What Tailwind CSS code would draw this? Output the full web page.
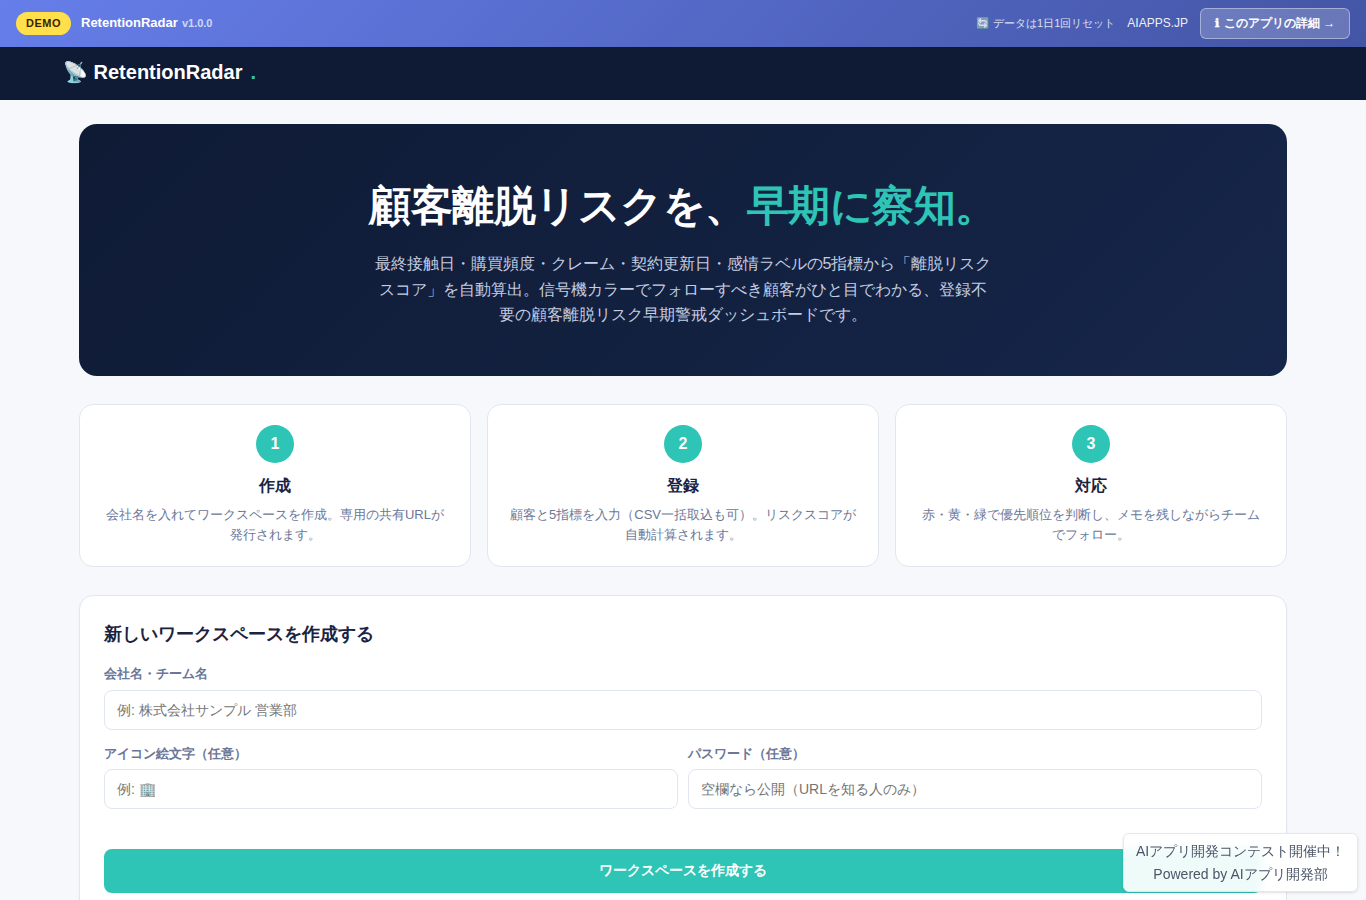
<!DOCTYPE html>
<html lang="ja">
<head>
    <meta charset="UTF-8">
    <meta name="viewport" content="width=device-width, initial-scale=1.0">
    <title>RetentionRadar</title>
    <script src="https://cdn.jsdelivr.net/npm/@tailwindcss/browser@4"></script>
</head>
<body class="bg-[#f7f8fc] text-[#1a2340] font-['Liberation_Sans',sans-serif] h-screen overflow-hidden">
    <!-- Demo bar -->
    <div class="h-[47px] px-4 flex items-center justify-between text-white bg-linear-135 from-[#667eea] to-[#4355a5]">
        <div class="flex items-center gap-2.5">
            <span class="h-[23px] px-2.5 flex items-center rounded-full bg-[#ffe04a] text-[#3d2000] text-[11px] font-bold tracking-[0.5px]">DEMO</span>
            <span class="pb-px text-[13px] font-bold">RetentionRadar <span class="ml-[0.5px] text-[11px] opacity-70">v1.0.0</span></span>
        </div>
        <div class="flex items-center gap-3">
            <span class="text-[11px] opacity-80">🔄 データは1日1回リセット</span>
            <span class="pb-px text-xs opacity-90">AIAPPS.JP</span>
            <a href="#" class="w-[150px] h-[31px] pl-3.5 pb-0.5 flex items-center rounded-md border border-white/40 bg-white/20 text-xs font-bold"><span class="whitespace-nowrap"><span class="mr-px font-['DejaVu_Sans'] [-webkit-text-stroke:0.5px_white]">ℹ</span> このアプリの詳細 →</span></a>
        </div>
    </div>

    <!-- Header -->
    <header class="h-[53px] px-[63px] pb-1 flex items-center bg-[#0f1b35] text-white text-xl font-bold">
        <span>📡 RetentionRadar</span><span class="ml-2 text-[#2ec4b6]">.</span>
    </header>

    <main class="w-[1208px] mx-auto pt-6">
        <!-- Hero -->
        <section class="h-[252px] pt-12 rounded-[18px] text-center bg-linear-135 from-[#0f1b35] to-[#16264a]">
            <h1 class="h-[67px] leading-[67px] text-[42px] font-bold tracking-[-0.5px] text-white">顧客離脱リスクを、<span class="text-[#2ec4b6]">早期に察知。</span></h1>
            <p class="w-[620px] mx-auto mt-3 text-base leading-[25.6px] text-[#c5cde0]">最終接触日・購買頻度・クレーム・契約更新日・感情ラベルの5指標から「離脱リスクスコア」を自動算出。信号機カラーでフォローすべき顧客がひと目でわかる、登録不要の顧客離脱リスク早期警戒ダッシュボードです。</p>
        </section>

        <!-- Steps -->
        <section class="mt-7 grid grid-cols-3 gap-4 text-center">
            <div class="h-[163px] p-5 rounded-[14px] border border-[#e2e6f0] bg-white">
                <div class="size-[38px] mx-auto flex items-center justify-center rounded-full bg-[#2ec4b6] text-white font-bold">1</div>
                <h3 class="mt-2.5 text-base leading-[26px] font-bold">作成</h3>
                <p class="mt-1.5 text-[13px] leading-5 text-[#6b7799]">会社名を入れてワークスペースを作成。専用の共有URLが発行されます。</p>
            </div>
            <div class="h-[163px] p-5 rounded-[14px] border border-[#e2e6f0] bg-white">
                <div class="size-[38px] mx-auto flex items-center justify-center rounded-full bg-[#2ec4b6] text-white font-bold">2</div>
                <h3 class="mt-2.5 text-base leading-[26px] font-bold">登録</h3>
                <p class="mt-1.5 text-[13px] leading-5 text-[#6b7799]">顧客と5指標を入力（CSV一括取込も可）。リスクスコアが自動計算されます。</p>
            </div>
            <div class="h-[163px] p-5 rounded-[14px] border border-[#e2e6f0] bg-white">
                <div class="size-[38px] mx-auto flex items-center justify-center rounded-full bg-[#2ec4b6] text-white font-bold">3</div>
                <h3 class="mt-2.5 text-base leading-[26px] font-bold">対応</h3>
                <p class="mt-1.5 text-[13px] leading-5 text-[#6b7799]">赤・黄・緑で優先順位を判断し、メモを残しながらチームでフォロー。</p>
            </div>
        </section>

        <!-- Create workspace form -->
        <form class="mt-7 p-6 rounded-[14px] border border-[#e2e6f0] bg-white shadow-xs">
            <h2 class="text-lg leading-[29px] font-bold">新しいワークスペースを作成する</h2>
            <label class="block mt-3.5 text-[13px] leading-[21px] font-bold text-[#6b7799]">会社名・チーム名</label>
            <input type="text" placeholder="例: 株式会社サンプル 営業部" class="block w-full h-10 mt-1.5 px-3 rounded-lg border border-[#e2e6f0] text-sm placeholder:text-[#757575]">
            <div class="mt-[13px] grid grid-cols-2 gap-2.5">
                <div>
                    <label class="block text-[13px] leading-[21px] font-bold text-[#6b7799]">アイコン絵文字（任意）</label>
                    <input type="text" placeholder="例: 🏢" class="block w-full h-10 mt-[5px] px-3 rounded-lg border border-[#e2e6f0] text-sm placeholder:text-[#757575]">
                </div>
                <div>
                    <label class="block text-[13px] leading-[21px] font-bold text-[#6b7799]">パスワード（任意）</label>
                    <input type="password" placeholder="空欄なら公開（URLを知る人のみ）" class="block w-full h-10 mt-[5px] px-3 rounded-lg border border-[#e2e6f0] text-sm placeholder:text-[#757575]">
                </div>
            </div>
            <button type="button" class="w-full h-11 mt-10 pb-0.5 rounded-lg bg-[#2ec4b6] text-white text-sm font-bold">ワークスペースを作成する</button>
        </form>
    </main>

    <!-- Contest badge -->
    <div class="fixed right-2 bottom-2 w-[235px] h-[59px] pt-1.5 rounded-md border border-[#e5e7eb] bg-white/92 backdrop-blur-xs shadow-sm text-center text-sm leading-[23px] text-[#4a5568]">
        AIアプリ開発コンテスト開催中！<br>Powered by AIアプリ開発部
    </div>
</body>
</html>
